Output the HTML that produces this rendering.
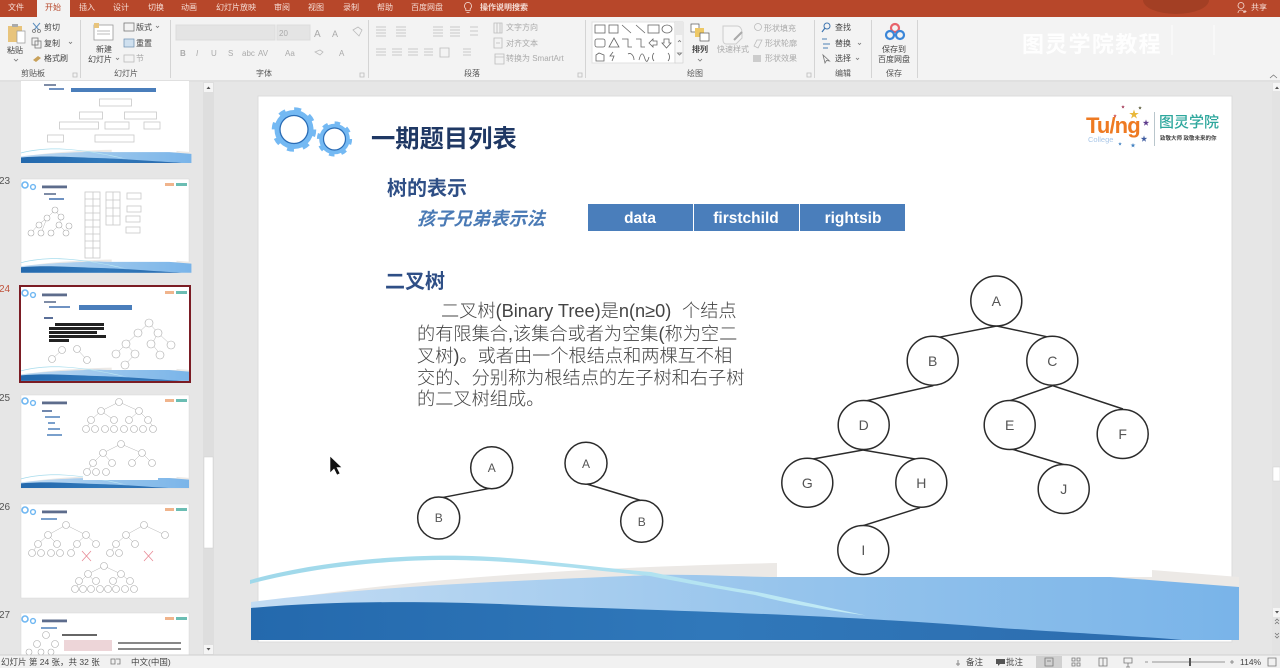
<!DOCTYPE html>
<html lang="zh"><head><meta charset="utf-8"><title>一期题目列表</title>
<style>
html,body{margin:0;padding:0;width:1280px;height:668px;overflow:hidden;background:#e6e6e6}
svg{display:block;font-family:"Liberation Sans","Noto Sans CJK SC",sans-serif}
.r{font-size:8px;fill:#444}
.g{font-size:8px;fill:#aaa}
.l{font-size:8px;fill:#555}
.m{font-size:8px;fill:#f6ddd5}
.n{font-size:10px;fill:#555}
.ic{fill:none;stroke:#777;stroke-width:.8}
.ig{fill:none;stroke:#bbb;stroke-width:.8}
.sep{stroke:#d4d4d4;stroke-width:1}
.t{fill:#fff;stroke:#c8c8c8;stroke-width:.8}
.c{fill:#fff;stroke:#aaa;stroke-width:.6}
.e{fill:none;stroke:#b5b5b5;stroke-width:.5}
.st{font-size:8.5px;fill:#444}
</style></head><body>
<svg width="1280" height="668" viewBox="0 0 1280 668" xmlns="http://www.w3.org/2000/svg">
<defs>
<linearGradient id="lb" x1="0" x2="1" y1="0" y2="0"><stop offset="0" stop-color="#c3dcf3"/><stop offset=".55" stop-color="#96c4ec"/><stop offset="1" stop-color="#79b4e9"/></linearGradient>
<linearGradient id="db" x1="0" x2="1" y1="0" y2="0"><stop offset="0" stop-color="#2469ad"/><stop offset=".5" stop-color="#3078ba"/><stop offset="1" stop-color="#2c6cae"/></linearGradient>
<linearGradient id="tl" x1="0" x2="1" y1="0" y2="0"><stop offset="0" stop-color="#9fd8ea"/><stop offset=".6" stop-color="#aee0ef"/><stop offset="1" stop-color="#c4ecf7"/></linearGradient>
<g id="wave">
<path d="M251 604C400 580 560 568 777 563V577H1152V570L1239 577V640H251Z" fill="#ece9e6"/>
<path d="M778 563H1152V577H778Z" fill="#fff"/>
<path d="M251 602C380 585 540 580 651 575C700 574 740 577 778 577H1110L1239 587V640H251Z" fill="url(#lb)"/>
<path d="M251 608C330 601 420 601 500 604C620 610 800 612 1000 628C1090 634 1150 637 1182 640H251Z" fill="url(#db)"/>
<path d="M250 580C320 560 410 554 472 556C530 558 590 567 651 572C690 580 725 587 757 592C795 600 830 608 866 615.500C825 610 785 603 755 595C720 589 690 584 650 576C590 570 530 562 472 560.500C410 558 320 565 250 584Z" fill="url(#tl)"/>
</g>
<g id="thumbhead">
<circle cx="25" cy="0" r="3" fill="none" stroke="#6fb7f2" stroke-width="1.600"/>
<circle cx="33" cy="2" r="2.400" fill="none" stroke="#6fb7f2" stroke-width="1.400"/>
<rect x="42" y="0.500" width="25" height="2.800" fill="#5d6c8c"/>
<rect x="165" y="-2" width="9" height="3" fill="#f0b48c"/>
<rect x="176" y="-2" width="11" height="3" fill="#6bbdb3"/>
</g>
</defs>

<!-- title bar -->
<rect width="1280" height="17" fill="#b7472a"/>
<ellipse cx="1176" cy="0" rx="33" ry="14" fill="#a33f24"/>
<rect x="37" y="0" width="33" height="18" fill="#f3f3f3"/>
<text x="8" y="10" class="m">文件</text>
<text x="45" y="10" style="font-size:8px" fill="#b7472a">开始</text>
<text x="79" y="10" class="m">插入</text>
<text x="113" y="10" class="m">设计</text>
<text x="148" y="10" class="m">切换</text>
<text x="181" y="10" class="m">动画</text>
<text x="216" y="10" class="m">幻灯片放映</text>
<text x="274" y="10" class="m">审阅</text>
<text x="308" y="10" class="m">视图</text>
<text x="343" y="10" class="m">录制</text>
<text x="377" y="10" class="m">帮助</text>
<text x="411" y="10" class="m">百度网盘</text>
<path d="M468 2.500a3.500 3.500 0 0 1 2.200 6.200v1.800h-4.400v-1.800A3.500 3.500 0 0 1 468 2.500Z M466.500 12.500h3" fill="none" stroke="#f6ddd5" stroke-width=".8"/>
<text x="480" y="10" class="m" font-weight="700">操作说明搜索</text>
<circle cx="1241" cy="5.500" r="3" fill="none" stroke="#f6ddd5" stroke-width=".8"/>
<path d="M1238 13c0-4 6-4 6 0M1245 10v3M1243.500 11.500h3" fill="none" stroke="#f6ddd5" stroke-width=".8"/>
<text x="1251" y="10" class="m">共享</text>

<!-- ribbon -->
<rect y="17" width="1280" height="63" fill="#f3f3f3"/>
<rect y="80" width="1280" height="2" fill="#e0e0e0"/>
<g class="sep"><path d="M80.500 20V78M170.500 20V78M368.500 20V78M585.500 20V78M814.500 20V78M871.500 20V78M917.500 20V78"/></g>

<path d="M8 26h14v16H8Z" fill="#e8c47c"/><rect x="12" y="24" width="6" height="3" fill="#aaa"/><path d="M17 31h8v12h-8Z" fill="#fff" stroke="#999" stroke-width=".7"/>
<text x="7" y="53" class="r">粘贴</text><path d="M14 59l2 2 2-2" class="ic"/>
<path d="M33 23l6 7M40 23l-6 7" stroke="#5e8fbe" fill="none"/><circle cx="34" cy="31" r="1.500" class="ic"/><circle cx="39" cy="31" r="1.500" class="ic"/>
<text x="44" y="30" class="r">剪切</text>
<rect x="32" y="38" width="6" height="7" class="ic"/><rect x="35" y="41" width="6" height="7" class="ic"/>
<text x="44" y="46" class="r">复制</text><path d="M69 42l1.500 1.500L72 42" class="ic"/>
<path d="M33 60l5-4 3 2-5 4Z" fill="#c8a15a"/>
<text x="44" y="61" class="r">格式刷</text>
<text x="21" y="76" class="l">剪贴板</text><path d="M73 73h4v4h-4Z" class="ig"/>

<rect x="94" y="25" width="19" height="15" fill="#fff" stroke="#999" stroke-width=".8"/><rect x="94" y="23" width="5" height="5" fill="#e8c47c"/><path d="M97 31h13M97 34h13" stroke="#bbb"/>
<text x="96" y="52" class="r">新建</text><text x="88" y="62" class="r">幻灯片</text><path d="M116 58l1.500 1.500L119 58" class="ic"/>
<rect x="124" y="23" width="10" height="8" class="ic"/><text x="136" y="30" class="r">版式</text><path d="M156 26l1.500 1.500L159 26" class="ic"/>
<rect x="124" y="39" width="10" height="8" fill="#cfe0ef" stroke="#6a8db0" stroke-width=".7"/><text x="136" y="46" class="r">重置</text>
<rect x="124" y="55" width="10" height="7" class="ig"/><text x="136" y="61" class="g">节</text>
<text x="114" y="76" class="l">幻灯片</text>

<rect x="176" y="25" width="99" height="15" fill="#e4e4e4" stroke="#dcdcdc"/><rect x="277" y="25" width="33" height="15" fill="#e4e4e4" stroke="#dcdcdc"/>
<text x="279" y="36" class="g">20</text>
<text x="314" y="37" style="font-size:10px" fill="#aaa">A</text><text x="332" y="37" style="font-size:9px" fill="#aaa">A</text>
<path d="M353 30l6 6 3-6-4-3Z" class="ig"/>
<g style="font-size:8px" fill="#aaa"><text x="180" y="56" font-weight="700">B</text><text x="196" y="56" font-style="italic">I</text><text x="211" y="56">U</text><text x="228" y="56">S</text><text x="242" y="56">abc</text><text x="258" y="56">AV</text><text x="285" y="56">Aa</text><text x="339" y="56">A</text></g>
<path d="M315 52l5-2 3 2-3 3Z" class="ig"/>
<text x="256" y="76" class="l">字体</text><path d="M360 73h4v4h-4Z" class="ig"/>

<g class="ig"><path d="M376 27h10M376 30h10M376 33h10M376 36h10M396 27h10M396 30h10M396 33h10M396 36h10M433 27h10M433 30h10M433 33h10M433 36h10M450 27h10M450 30h10M450 33h10M450 36h10M470 27h8M470 31h8M470 35h8"/>
<path d="M376 49h10M376 52h10M376 55h10M392 49h10M392 52h10M392 55h10M408 49h10M408 52h10M408 55h10M424 49h9M424 52h9M424 55h9M440 48h9v9h-9ZM463 49h8M463 52h8M463 55h8"/></g>
<text x="464" y="76" class="l">段落</text><path d="M578 73h4v4h-4Z" class="ig"/>
<path d="M494 23h8v10h-8ZM497 23v10M500 23v10" class="ig"/><text x="506" y="30" class="g">文字方向</text>
<path d="M494 38h8v10h-8ZM496 43h4" class="ig"/><text x="506" y="46" class="g">对齐文本</text>
<path d="M495 54h9v10h-9ZM495 57h9" class="ig"/><text x="506" y="61" class="g">转换为 SmartArt</text>

<rect x="592" y="22" width="83" height="41" fill="#fff" stroke="#e0e0e0"/>
<rect x="675" y="22" width="8" height="41" fill="#f7f7f7" stroke="#ccc" stroke-width=".6"/>
<rect x="675" y="22" width="8" height="13" fill="#e8e8e8"/>
<path d="M678 42l1.500 -1.500 1.500 1.500M677.500 53h4l-2 2Z" class="ic"/>
<g fill="none" stroke="#666" stroke-width=".8">
<rect x="595" y="25" width="10" height="8"/><rect x="609" y="25" width="9" height="8"/><path d="M622 25l9 8M636 25l9 8"/><rect x="648" y="25" width="11" height="8"/><ellipse cx="667" cy="29" rx="5" ry="4"/>
<rect x="595" y="39" width="10" height="8" rx="2"/><path d="M614 38l-5 9h10ZM622 39h6v8h4M636 39h5v8h4M649 43l4-4v2h4v4h-4v2Z M664 39h5v4h2l-4.500 5-4.500-5h2Z"/>
<path d="M596 61v-6l3-2 5 2v6ZM613 52l-3 4h4l-2 5M628 54c3-2 6 2 6 6M639 60c2-8 4-8 6-1 2 5 3 1 4-2M654 53c-2 2-2 6 0 8M668 53c2 2 2 6 0 8"/>
</g>
<rect x="691" y="24" width="8" height="8" fill="#fff" stroke="#555" stroke-width=".7"/><rect x="695" y="28" width="9" height="9" fill="#edc866"/><rect x="700" y="33" width="9" height="8" fill="#fff" stroke="#555" stroke-width=".7"/>
<text x="692" y="52" class="r" font-weight="700">排列</text><path d="M698 59l2 2 2-2" class="ic"/>
<path d="M723 26h14c3 0 5 3 5 6v6l-6 6h-10c-2 0-3-2-3-4Z" fill="#f5f5f5" stroke="#ccc"/><path d="M734 40l8-8" stroke="#aaa" stroke-width="2"/>
<text x="717" y="52" class="g">快速样式</text>
<circle cx="758" cy="27" r="3.500" class="ig"/><text x="764" y="31" class="g">形状填充</text>
<path d="M754 46l3-6h5l-4 8Z" class="ig"/><text x="765" y="46" class="g">形状轮廓</text>
<rect x="753" y="55" width="8" height="7" fill="#ccc"/><text x="765" y="61" class="g">形状效果</text>
<text x="687" y="76" class="l">绘图</text><path d="M807 73h4v4h-4Z" class="ig"/>

<circle cx="827" cy="26" r="3" fill="none" stroke="#3f76b0"/><path d="M825 28l-3 4" stroke="#3f76b0" stroke-width="1.200"/>
<text x="835" y="30" class="r">查找</text>
<path d="M822 39h5M823 44h7M823 48h5" stroke="#4d80b5"/><text x="835" y="46" class="r">替换</text><path d="M858 43l1.500 1.500L861 43" class="ic"/>
<path d="M823 55l2 8 1.500-2.500 3 .5Z" class="ic"/><text x="835" y="61" class="r">选择</text><path d="M856 58l1.500 1.500L859 58" class="ic"/>
<text x="835" y="76" class="l">编辑</text>

<circle cx="895" cy="28" r="4" fill="none" stroke="#e8636b" stroke-width="2.200"/>
<circle cx="890" cy="35" r="4" fill="none" stroke="#3a86d8" stroke-width="2.200"/>
<circle cx="900" cy="35" r="4" fill="none" stroke="#3a86d8" stroke-width="2.200"/>
<text x="882" y="52" class="r">保存到</text><text x="878" y="62" class="r">百度网盘</text><text x="886" y="76" class="l">保存</text>
<path d="M1270 78l3.500-3 3.500 3" class="ic"/>
<text x="1022" y="52" style="font-size:22px;letter-spacing:1.300px" fill="#fff" opacity=".95" font-weight="700">图灵学院教程</text>
<path d="M1172 25v30M1214 25v30" stroke="#f8f8f8" stroke-width="2"/>

<!-- left panel -->
<rect x="0" y="82" width="216" height="573" fill="#e6e6e6"/>
<rect x="203" y="82" width="11" height="573" fill="#dedede"/>
<rect x="204" y="83" width="9" height="9" fill="#f5f5f5"/><path d="M206.500 89l2-2.500 2 2.500Z" fill="#555"/>
<rect x="204" y="457" width="9" height="91" fill="#fff" stroke="#cfcfcf" stroke-width=".5"/>
<rect x="204" y="645" width="9" height="9" fill="#f5f5f5"/><path d="M206.500 648l2 2.500 2-2.500Z" fill="#555"/>

<!-- thumb 22 -->
<rect x="21" y="81" width="168" height="82" fill="#fff"/>
<use href="#wave" transform="translate(-22.300 52.600) scale(.1725)"/>
<rect x="44" y="84" width="12" height="2" fill="#7e8ca6"/><rect x="49" y="88" width="15" height="2" fill="#6f92c2"/>
<rect x="71" y="88" width="85" height="4" fill="#4a7ebb"/>
<g class="t"><rect x="99.500" y="99" width="32" height="7"/><rect x="79.500" y="112" width="23" height="7"/><rect x="124.500" y="112" width="32" height="7"/><rect x="59.500" y="122" width="39" height="7"/><rect x="105" y="122" width="24" height="7"/><rect x="144" y="122" width="16" height="7"/><rect x="47.500" y="135" width="16" height="7"/><rect x="95" y="135" width="39" height="7"/></g>
<!-- thumb 23 -->
<rect x="21" y="179" width="168" height="93" fill="#fff" stroke="#d8d8d8" stroke-width=".5"/>
<use href="#wave" transform="translate(-22.300 162.400) scale(.1725)"/>
<use href="#thumbhead" x="0" y="185"/>
<rect x="44" y="193" width="12" height="2" fill="#7e8ca6"/><rect x="49" y="198" width="15" height="2" fill="#6f92c2"/>
<g class="t"><rect x="85" y="192" width="15" height="66"/><path d="M85 199h15M85 206h15M85 213h15M85 220h15M85 227h15M85 234h15M85 241h15M85 248h15M93 192v66"/><rect x="106" y="192" width="14" height="33"/><path d="M106 200h14M106 208h14M106 216h14M113 192v33"/><rect x="127" y="193" width="14" height="6"/><rect x="127" y="206" width="14" height="6"/><rect x="126" y="216" width="14" height="6"/><rect x="126" y="227" width="14" height="6"/></g>
<g><path d="M55 210L47 218 38 225 31 233M55 210L61 218 59 225 67 233M47 218L41 233M59 225L51 233" class="e"/><circle cx="55" cy="210" r="3" class="c"/><circle cx="47" cy="218" r="3" class="c"/><circle cx="61" cy="217" r="3" class="c"/><circle cx="39" cy="225" r="3" class="c"/><circle cx="59" cy="225" r="3" class="c"/><circle cx="69" cy="226" r="3" class="c"/><circle cx="31" cy="233" r="3" class="c"/><circle cx="41" cy="233" r="3" class="c"/><circle cx="51" cy="233" r="3" class="c"/><circle cx="66" cy="233" r="3" class="c"/></g>
<!-- thumb 24 -->
<rect x="20" y="286" width="170" height="96" fill="#fff" stroke="#7b1c24" stroke-width="2"/>
<svg x="21" y="287" width="168" height="94" viewBox="0 0 168 94"><use href="#wave" transform="translate(-43.300 -16.500) scale(.1725)"/></svg>
<use href="#thumbhead" x="0" y="293"/>
<rect x="44" y="301" width="12" height="2" fill="#7e8ca6"/><rect x="49" y="306" width="21" height="2" fill="#6f92c2"/>
<rect x="79" y="305" width="53" height="5" fill="#4a7ebb"/>
<rect x="44" y="317" width="9" height="2" fill="#5a6f98"/>
<g fill="#222"><rect x="55" y="323" width="49" height="3"/><rect x="49" y="327" width="55" height="3"/><rect x="49" y="331" width="48" height="3"/><rect x="49" y="335" width="57" height="3"/><rect x="49" y="339" width="20" height="3"/></g>
<g><path d="M62 350L52 359M77 349L87 360" class="e"/><circle cx="62" cy="350" r="3.500" class="c"/><circle cx="52" cy="359" r="3.500" class="c"/><circle cx="77" cy="349" r="3.500" class="c"/><circle cx="87" cy="360" r="3.500" class="c"/>
<path d="M149 323L138 333 126 344 116 354M126 344L135 354 125 365M149 323L158 333 152 344 160 354M158 333L171 345" class="e"/><circle cx="149" cy="323" r="4" class="c"/><circle cx="138" cy="333" r="4" class="c"/><circle cx="158" cy="333" r="4" class="c"/><circle cx="126" cy="344" r="4" class="c"/><circle cx="151" cy="344" r="4" class="c"/><circle cx="171" cy="345" r="4" class="c"/><circle cx="116" cy="354" r="4" class="c"/><circle cx="135" cy="354" r="4" class="c"/><circle cx="160" cy="355" r="4" class="c"/><circle cx="125" cy="365" r="4" class="c"/></g>
<!-- thumb 25 -->
<rect x="21" y="395" width="168" height="93" fill="#fff" stroke="#d8d8d8" stroke-width=".5"/>
<svg x="21" y="395" width="168" height="93" viewBox="0 0 168 93"><use href="#wave" transform="translate(-43.300 -16.500) scale(.1725)"/><rect x="62" y="70" width="75" height="15" fill="#fff"/></svg>
<use href="#thumbhead" x="0" y="401"/>
<rect x="42" y="410" width="10" height="2" fill="#7087ad"/><rect x="45" y="416" width="15" height="2" fill="#7aa0cc"/><rect x="48" y="422" width="7" height="2" fill="#7aa0cc"/><rect x="48" y="428" width="12" height="2" fill="#7aa0cc"/><rect x="47" y="434" width="15" height="2" fill="#7aa0cc"/>
<g><path d="M119 402L101 411 91 420 86 429M119 402L139 411 148 420 155 429M101 411L114 420M139 411L129 420" class="e"/><circle cx="119" cy="402" r="3.500" class="c"/><circle cx="101" cy="411" r="3.500" class="c"/><circle cx="139" cy="411" r="3.500" class="c"/><circle cx="91" cy="420" r="3.500" class="c"/><circle cx="114" cy="420" r="3.500" class="c"/><circle cx="129" cy="420" r="3.500" class="c"/><circle cx="148" cy="420" r="3.500" class="c"/><circle cx="86" cy="429" r="3.500" class="c"/><circle cx="95" cy="429" r="3.500" class="c"/><circle cx="105" cy="429" r="3.500" class="c"/><circle cx="114" cy="429" r="3.500" class="c"/><circle cx="124" cy="429" r="3.500" class="c"/><circle cx="134" cy="429" r="3.500" class="c"/><circle cx="143" cy="429" r="3.500" class="c"/><circle cx="153" cy="429" r="3.500" class="c"/>
<path d="M121 444L103 453 93 463 87 472M121 444L142 453 152 463M103 453L112 463M142 453L132 463" class="e"/><circle cx="121" cy="444" r="3.500" class="c"/><circle cx="103" cy="453" r="3.500" class="c"/><circle cx="142" cy="453" r="3.500" class="c"/><circle cx="93" cy="463" r="3.500" class="c"/><circle cx="112" cy="463" r="3.500" class="c"/><circle cx="132" cy="463" r="3.500" class="c"/><circle cx="152" cy="463" r="3.500" class="c"/><circle cx="87" cy="472" r="3.500" class="c"/><circle cx="96" cy="472" r="3.500" class="c"/><circle cx="106" cy="472" r="3.500" class="c"/></g>
<!-- thumb 26 -->
<rect x="21" y="504" width="168" height="94" fill="#fff" stroke="#d8d8d8" stroke-width=".5"/>
<use href="#thumbhead" x="0" y="510"/>
<rect x="41" y="518" width="16" height="2" fill="#7aa0cc"/>
<g><path d="M66 525L48 535 38 544 32 553M66 525L86 535 76 544 71 553M48 535L57 544M86 535L96 544M144 525L126 535 116 544 110 553M144 525L165 535M126 535L135 544" class="e"/><circle cx="66" cy="525" r="3.500" class="c"/><circle cx="48" cy="535" r="3.500" class="c"/><circle cx="86" cy="535" r="3.500" class="c"/><circle cx="38" cy="544" r="3.500" class="c"/><circle cx="57" cy="544" r="3.500" class="c"/><circle cx="77" cy="544" r="3.500" class="c"/><circle cx="96" cy="544" r="3.500" class="c"/><circle cx="32" cy="553" r="3.500" class="c"/><circle cx="41" cy="553" r="3.500" class="c"/><circle cx="51" cy="553" r="3.500" class="c"/><circle cx="60" cy="553" r="3.500" class="c"/><circle cx="71" cy="553" r="3.500" class="c"/><circle cx="144" cy="525" r="3.500" class="c"/><circle cx="126" cy="535" r="3.500" class="c"/><circle cx="165" cy="535" r="3.500" class="c"/><circle cx="116" cy="544" r="3.500" class="c"/><circle cx="135" cy="544" r="3.500" class="c"/><circle cx="110" cy="553" r="3.500" class="c"/><circle cx="119" cy="553" r="3.500" class="c"/>
<path d="M82 551l9 10M91 551l-9 10M144 551l9 10M153 551l-9 10" stroke="#e88a96" stroke-width=".8"/>
<path d="M104 566L88 574 79 583 75 589M104 566L121 574 132 583M88 574L96 583M121 574L113 583" class="e"/><circle cx="104" cy="566" r="3.500" class="c"/><circle cx="88" cy="574" r="3.500" class="c"/><circle cx="121" cy="574" r="3.500" class="c"/><circle cx="79" cy="581" r="3.500" class="c"/><circle cx="96" cy="581" r="3.500" class="c"/><circle cx="113" cy="581" r="3.500" class="c"/><circle cx="130" cy="581" r="3.500" class="c"/><circle cx="75" cy="589" r="3.500" class="c"/><circle cx="83" cy="589" r="3.500" class="c"/><circle cx="91" cy="589" r="3.500" class="c"/><circle cx="100" cy="589" r="3.500" class="c"/><circle cx="108" cy="589" r="3.500" class="c"/><circle cx="116" cy="589" r="3.500" class="c"/><circle cx="125" cy="589" r="3.500" class="c"/><circle cx="134" cy="589" r="3.500" class="c"/></g>
<!-- thumb 27 -->
<rect x="21" y="613" width="168" height="42" fill="#fff" stroke="#d8d8d8" stroke-width=".5"/>
<use href="#thumbhead" x="0" y="619"/>
<rect x="41" y="627" width="16" height="2" fill="#7aa0cc"/>
<rect x="62" y="634" width="35" height="2" fill="#666"/>
<rect x="64" y="640" width="48" height="11" fill="#edd5d8"/>
<rect x="118" y="642" width="63" height="2" fill="#888"/><rect x="118" y="648" width="63" height="2" fill="#888"/>
<circle cx="46" cy="635" r="3.500" class="c"/><circle cx="37" cy="644" r="3.500" class="c"/><circle cx="55" cy="644" r="3.500" class="c"/><circle cx="29" cy="652" r="3" class="c"/><circle cx="41" cy="652" r="3" class="c"/><circle cx="51" cy="652" r="3" class="c"/>

<text x="-1" y="184" class="n">23</text>
<text x="-1" y="292" class="n" style="fill:#c0533c">24</text>
<text x="-1" y="401" class="n">25</text>
<text x="-1" y="510" class="n">26</text>
<text x="-1" y="618" class="n">27</text>

<!-- slide -->
<rect x="258" y="96" width="974" height="546" fill="#fff" stroke="#dcdcdc"/>
<use href="#wave"/>

<circle cx="294" cy="129.500" r="20.500" fill="none" stroke="#74b9f3" stroke-width="3.500" stroke-dasharray="7 9.100"/>
<circle cx="294" cy="129.500" r="16.500" fill="#fff" stroke="#74b9f3" stroke-width="6"/>
<circle cx="294" cy="129.500" r="14" fill="#fff" stroke="#2a6cb5" stroke-width="1.300"/>
<circle cx="334.500" cy="139" r="16" fill="none" stroke="#74b9f3" stroke-width="3.200" stroke-dasharray="5.500 7.070"/>
<circle cx="334.500" cy="139" r="13" fill="#fff" stroke="#74b9f3" stroke-width="4.600"/>
<circle cx="334.500" cy="139" r="11" fill="#fff" stroke="#2a6cb5" stroke-width="1.200"/>

<text x="371" y="147" style="font-size:24.300px" font-weight="700" fill="#1f3864">一期题目列表</text>
<text x="387" y="195" style="font-size:20px" font-weight="700" fill="#2f4f86">树的表示</text>
<text x="417" y="225" style="font-size:18.300px" font-weight="700" font-style="italic" fill="#4a7ab5">孩子兄弟表示法</text>

<rect x="588" y="204" width="317" height="27" fill="#4a7ebb"/>
<path d="M693.500 204v27M799.500 204v27" stroke="#fff"/>
<g style="font-size:15.500px" font-weight="700" fill="#fff" text-anchor="middle"><text x="640" y="223">data</text><text x="746" y="223">firstchild</text><text x="853" y="223">rightsib</text></g>

<text x="385" y="288" style="font-size:20px" font-weight="700" fill="#2f4f86">二叉树</text>
<g style="font-size:18.200px" font-weight="300" fill="#444">
<text x="441" y="317">二叉树(Binary Tree)是n(n≥0)<tspan x="682">个结点</tspan></text>
<text x="417" y="340">的有限集合,该集合或者为空集(称为空二</text>
<text x="417" y="362">叉树)。或者由一个根结点和两棵互不相</text>
<text x="417" y="384">交的、分别称为根结点的左子树和右子树</text>
<text x="417" y="405">的二叉树组成。</text>
</g>

<!-- trees -->
<g fill="#fff" stroke="#2b2b2b" stroke-width="1.500">
<path d="M936.700 337.700L996.700 326L1046.700 336.700M933.300 385.700L866.700 400.700M1010 400.700L1052.700 385.700L1123 409M813 459L863 450L915 459M1011.700 449L1065 465M920 507.700L863 525.700M490 488.300L441.700 497.700M586.700 484L641.700 500.700" fill="none"/>
<ellipse cx="996.300" cy="301" rx="25.500" ry="25"/><ellipse cx="932.700" cy="360.700" rx="25.500" ry="24.500"/><ellipse cx="1052.300" cy="360.700" rx="25.500" ry="24.500"/><ellipse cx="863.700" cy="425" rx="25.500" ry="24.500"/><ellipse cx="1009.700" cy="425" rx="25.500" ry="24.500"/><ellipse cx="1122.700" cy="434" rx="25.500" ry="24.500"/><ellipse cx="807.300" cy="482.700" rx="25.500" ry="24.500"/><ellipse cx="921.300" cy="482.700" rx="25.500" ry="24.500"/><ellipse cx="1063.700" cy="489" rx="25.500" ry="24.500"/><ellipse cx="863.300" cy="550" rx="25.500" ry="24.500"/>
<circle cx="491.700" cy="467.700" r="21"/><circle cx="438.700" cy="518" r="21"/><circle cx="586" cy="463.300" r="21"/><circle cx="641.700" cy="521.300" r="21"/>
</g>
<g style="font-size:14px" fill="#555" text-anchor="middle">
<text x="996.300" y="306">A</text><text x="932.700" y="366">B</text><text x="1052.300" y="366">C</text><text x="863.700" y="430">D</text><text x="1009.700" y="430">E</text><text x="1122.700" y="439">F</text><text x="807.300" y="488">G</text><text x="921.300" y="488">H</text><text x="1063.700" y="494">J</text><text x="863.300" y="555">I</text>
<g style="font-size:12px"><text x="491.700" y="472">A</text><text x="438.700" y="522">B</text><text x="586" y="468">A</text><text x="641.700" y="526">B</text></g>
</g>

<!-- logo -->
<text x="1086" y="133" style="font-size:22px;letter-spacing:-.9px" font-weight="700" fill="#ee7a22">Tu/ng</text>
<text x="1088" y="142" style="font-size:7.500px" fill="#a9c7e8">College</text>
<path d="M1154.500 112v34" stroke="#b9c6cc"/>
<text x="1159" y="127" style="font-size:15px" font-weight="500" fill="#2ea79d">图灵学院</text>
<text x="1160" y="140" style="font-size:5.500px" font-weight="700" fill="#444">致敬大师 致敬未来的你</text>
<g text-anchor="middle"><text x="1134" y="118" style="font-size:10px" fill="#e9b83a">★</text><text x="1146" y="125" style="font-size:7px" fill="#5d3b8c">★</text><text x="1144" y="141" style="font-size:7px" fill="#3f5ca0">★</text><text x="1133" y="147" style="font-size:5px" fill="#3f7fc0">★</text><text x="1120" y="145" style="font-size:4px" fill="#3f7fc0">★</text><text x="1123" y="108" style="font-size:4px" fill="#a03050">★</text><text x="1140" y="109" style="font-size:4px" fill="#553">★</text><text x="1115" y="117" style="font-size:4px" fill="#c44">★</text></g>

<!-- right scrollbar -->
<rect x="1272" y="82" width="8" height="573" fill="#e3e3e3"/>
<rect x="1273" y="83" width="7" height="8" fill="#f5f5f5"/><path d="M1275 89l2-2.500 2 2.500Z" fill="#555"/>
<rect x="1273" y="467" width="7" height="14" fill="#fff" stroke="#cfcfcf" stroke-width=".5"/>
<rect x="1273" y="608" width="7" height="9" fill="#f5f5f5"/><path d="M1275 611l2 2.500 2-2.500Z" fill="#555"/>
<path d="M1275 621l2-2 2 2M1275 624l2-2 2 2M1275 633l2 2 2-2M1275 636l2 2 2-2" class="ic"/>

<!-- cursor -->
<path d="M330 456v17l4-4 3 6 3-1.500-3-6h5Z" fill="#111" stroke="#fff" stroke-width=".6"/>

<!-- status bar -->
<rect y="655" width="1280" height="13" fill="#f1f1f1"/>
<path d="M0 655h1280" stroke="#d0d0d0"/>
<text x="1" y="665" class="st">幻灯片 第 24 张，共 32 张</text>
<path d="M111 659h4v5h-4ZM116 659h4v5h-3" class="ic"/>
<text x="131" y="665" class="st">中文(中国)</text>
<path d="M958 660v6M956 664h4" stroke="#888"/>
<text x="966" y="665" class="st">备注</text>
<path d="M996 659h9v5h-5l-2 2v-2h-2Z" fill="#555"/>
<text x="1006" y="665" class="st">批注</text>
<rect x="1036" y="656" width="26" height="12" fill="#d0d0d0"/>
<path d="M1045 658h8v8h-8ZM1047 661h4" class="ic"/>
<path d="M1072 658h3v3h-3ZM1077 658h3v3h-3ZM1072 663h3v3h-3ZM1077 663h3v3h-3ZM1099 658h8v8h-8ZM1103 658v8M1124 658h8v5h-8ZM1128 663v4M1126 667h4" class="ic"/>
<path d="M1145 662h3M1152 662h73M1230 662h4M1232 660v4" stroke="#777" stroke-width=".8"/>
<rect x="1189" y="658" width="2" height="8" fill="#555"/>
<text x="1240" y="665" class="st">114%</text>
<path d="M1268 658h8v8h-8Z" class="ic"/>
</svg>
</body></html>
